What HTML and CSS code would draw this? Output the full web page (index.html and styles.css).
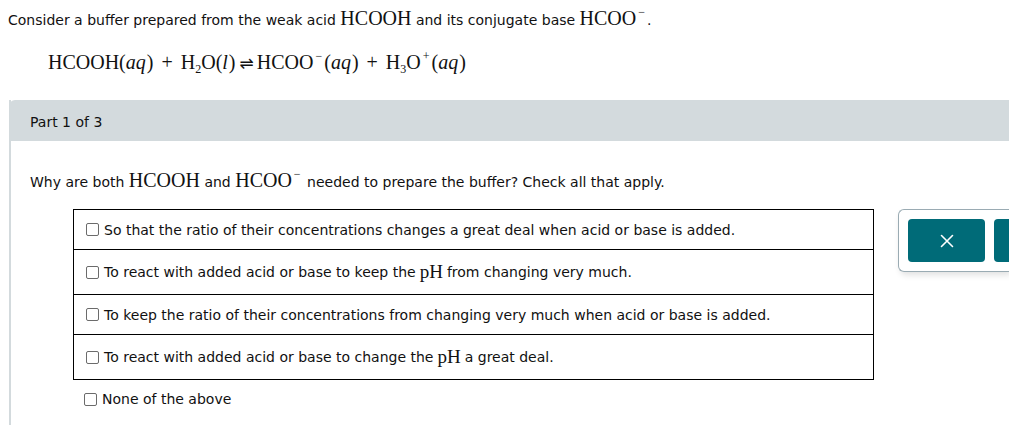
FILE: index.html
```html
<!DOCTYPE html>
<html>
<head>
<meta charset="utf-8">
<link rel="stylesheet" href="styles.css">
</head>
<body>
<div class="intro">Consider a buffer prepared from the weak acid <span class="m">HCOOH</span> and its conjugate base <span class="m">HCOO<sup class="sup">−</sup></span>.</div>
<div class="equation"><span class="m">HCOOH(<span class="it">aq</span>)<span class="op">+</span>H<sub class="sub">2</sub>O(<span class="it">l</span>)<span class="arrow">⇌</span>HCOO<sup class="sup">−</sup>(<span class="it">aq</span>)<span class="op">+</span>H<sub class="sub">3</sub>O<sup class="sup">+</sup>(<span class="it">aq</span>)</span></div>
<div class="part">
  <div class="part-head">Part 1 of 3</div>
  <div class="part-body">
    <div class="question">Why are both <span class="m">HCOOH</span> and <span class="m">HCOO<sup class="sup">−</sup></span> needed to prepare the buffer? Check all that apply.</div>
    <div class="answer-row">
      <div class="options">
        <div class="opt"><span class="box"></span>So that the ratio of their concentrations changes a great deal when acid or base is added.</div>
        <div class="opt tall"><span class="box"></span>To react with added acid or base to keep the <span class="m ph">pH</span> from changing very much.</div>
        <div class="opt"><span class="box"></span>To keep the ratio of their concentrations from changing very much when acid or base is added.</div>
        <div class="opt tall"><span class="box"></span>To react with added acid or base to change the <span class="m ph">pH</span> a great deal.</div>
        <div class="none"><span class="box"></span>None of the above</div>
      </div>
      <div class="tools">
        <div class="btn"><svg width="14" height="14" viewBox="0 0 14 14"><path d="M1.5 1.5 L12.5 12.5 M12.5 1.5 L1.5 12.5" stroke="#fff" stroke-width="1.6" stroke-linecap="round"/></svg></div>
        <div class="btn"></div>
      </div>
    </div>
  </div>
</div>
</body>
</html>
```
FILE: styles.css
```css
html, body {
  margin: 0;
  padding: 0;
  overflow: hidden;
  background: #fff;
}
body {
  font-family: "DejaVu Sans", Verdana, sans-serif;
  font-size: 14px;
  color: #111;
  width: 1009px;
  height: 425px;
}
.m {
  font-family: "Liberation Serif", "Times New Roman", serif;
  font-size: 20px;
}
.it {
  font-style: italic;
  padding-right: 1px;
}
.sup {
  font-size: 12px;
  vertical-align: 9px;
  line-height: 0;
  padding: 0 2px;
}
.sub {
  font-size: 12px;
  vertical-align: -4px;
  line-height: 0;
}
.op {
  margin: 0 8px;
}
.arrow {
  font-family: "DejaVu Sans", sans-serif;
  font-size: 17px;
  margin: 0 3px 0 4px;
}
.intro {
  padding: 6px 0 0 8px;
  height: 30px;
  line-height: 24px;
}
.equation {
  padding: 14px 0 0 48px;
  height: 50px;
  line-height: 24px;
}
.part {
  margin-left: 9px;
  border-left: 2px solid #d3dadd;
  height: 330px;
}
.part-head {
  background: #d3dadd;
  height: 41px;
  line-height: 44px;
  border-top-left-radius: 6px;
  margin-left: -2px;
  padding-left: 21px;
}
.part-body {
  padding: 27px 0 0 19px;
}
.question {
  line-height: 24px;
  height: 41px;
}
.answer-row {
  display: flex;
  align-items: flex-start;
  margin-left: 43px;
  overflow: hidden;
  padding-bottom: 8px;
}
.options {
  width: 801px;
  flex: none;
}
.opt {
  display: flex;
  align-items: center;
  height: 40px;
  border: 1px solid #000;
  border-top: none;
  padding-left: 12px;
  box-sizing: border-box;
}
.opt:first-child {
  border-top: 1px solid #000;
  height: 41px;
}
.opt.tall {
  height: 45px;
}
.ph {
  font-size: 19px;
  margin: 0 4px;
}
.box {
  display: inline-block;
  width: 11px;
  height: 11px;
  border: 1px solid #6b6b6b;
  border-radius: 2px;
  margin-right: 5px;
  flex: none;
}
.none {
  display: flex;
  align-items: center;
  height: 38px;
  padding-left: 11px;
}
.tools {
  display: flex;
  gap: 9px;
  margin-left: 24px;
  padding: 9px 0 9px 9px;
  border: 1px solid #9aabb3;
  border-right: none;
  border-radius: 6px 0 0 6px;
  box-shadow: 2px 3px 6px rgba(0, 0, 0, 0.12);
  flex: 1 1 auto;
  min-width: 0;
  overflow: hidden;
}
.btn {
  width: 77px;
  height: 43px;
  background: #006b78;
  border-radius: 4px;
  display: flex;
  align-items: center;
  justify-content: center;
  flex: none;
}
```
